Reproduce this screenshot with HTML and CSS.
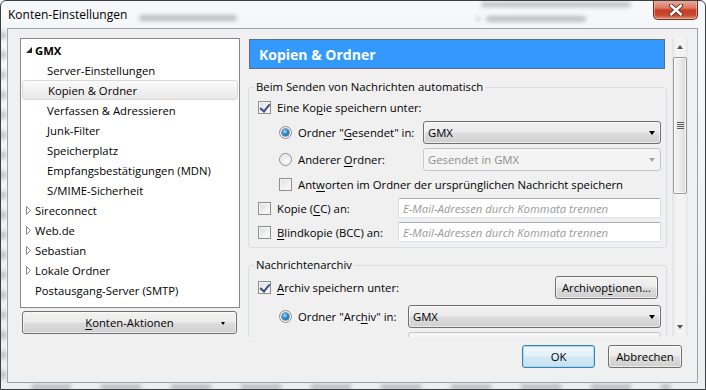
FILE: index.html
```html
<!DOCTYPE html>
<html lang="de">
<head>
    <meta charset="UTF-8">
    <title>Konten-Einstellungen</title>
    <link rel="stylesheet" href="styles.css">
</head>
<body>
    <div class="window">
        <div class="titlebar">
            <span class="title">Konten-Einstellungen</span>
            <span class="glass g1"></span>
            <span class="glass g2"></span>
            <span class="glass g3"></span>
            <span class="glass g4"></span>
            <div class="close-btn">
                <svg width="16" height="12" viewBox="0 0 16 12">
                    <path d="M3 1.5 L13 10.5 M13 1.5 L3 10.5" stroke="#5a2a22" stroke-width="4.2" stroke-linecap="round"/>
                    <path d="M3 1.5 L13 10.5 M13 1.5 L3 10.5" stroke="#ffffff" stroke-width="2.4" stroke-linecap="round"/>
                </svg>
            </div>
        </div>
        <span class="glass side-left"></span>
        <span class="glass side-bottom"></span>
        <div class="client">
            <div class="main">
                <div class="sidebar">
                    <ul class="tree">
                        <li class="tree-item top bold"><span class="twisty"><svg width="6" height="6"><polygon points="6,0 6,6 0,6" fill="#262626"/></svg></span>GMX</li>
                        <li class="tree-item sub">Server-Einstellungen</li>
                        <li class="tree-item sub selected">Kopien &amp; Ordner</li>
                        <li class="tree-item sub">Verfassen &amp; Adressieren</li>
                        <li class="tree-item sub">Junk-Filter</li>
                        <li class="tree-item sub">Speicherplatz</li>
                        <li class="tree-item sub">Empfangsbestätigungen (MDN)</li>
                        <li class="tree-item sub">S/MIME-Sicherheit</li>
                        <li class="tree-item top"><span class="twisty"><svg width="6" height="9"><polygon points="0.5,0.5 4.5,4.5 0.5,8.5" fill="#fff" stroke="#8a8a8a"/></svg></span>Sireconnect</li>
                        <li class="tree-item top"><span class="twisty"><svg width="6" height="9"><polygon points="0.5,0.5 4.5,4.5 0.5,8.5" fill="#fff" stroke="#8a8a8a"/></svg></span>Web.de</li>
                        <li class="tree-item top"><span class="twisty"><svg width="6" height="9"><polygon points="0.5,0.5 4.5,4.5 0.5,8.5" fill="#fff" stroke="#8a8a8a"/></svg></span>Sebastian</li>
                        <li class="tree-item top"><span class="twisty"><svg width="6" height="9"><polygon points="0.5,0.5 4.5,4.5 0.5,8.5" fill="#fff" stroke="#8a8a8a"/></svg></span>Lokale Ordner</li>
                        <li class="tree-item top">Postausgang-Server (SMTP)</li>
                    </ul>
                    <div class="btn btn-menu"><span class="btn-label"><u>K</u>onten-Aktionen</span><span class="menu-arrow"></span></div>
                </div>
                <div class="pane">
                    <div class="pane-content">
                        <div class="pane-header">Kopien &amp; Ordner</div>

                        <fieldset class="group">
                            <legend>Beim Senden von Nachrichten automatisch</legend>
                            <div class="row">
                                <span class="checkbox checked"></span>
                                <span>Eine Ko<u>p</u>ie speichern unter:</span>
                            </div>
                            <div class="row indent tall">
                                <span class="radio checked"></span>
                                <span class="label w-sent">Ordner "<u>G</u>esendet" in:</span>
                                <div class="select"><span>GMX</span><span class="arrow"></span></div>
                            </div>
                            <div class="row indent tall">
                                <span class="radio"></span>
                                <span class="label w-sent">Anderer <u>O</u>rdner:</span>
                                <div class="select disabled"><span>Gesendet in GMX</span><span class="arrow"></span></div>
                            </div>
                            <div class="row indent r4">
                                <span class="checkbox"></span>
                                <span>Ant<u>w</u>orten im Ordner der ursprünglichen Nachricht speichern</span>
                            </div>
                            <div class="row">
                                <span class="checkbox"></span>
                                <span class="label w-cc">Kopie (<u>C</u>C) an:</span>
                                <div class="textbox">E-Mail-Adressen durch Kommata trennen</div>
                            </div>
                            <div class="row">
                                <span class="checkbox"></span>
                                <span class="label w-cc"><u>B</u>lindkopie (BCC) an:</span>
                                <div class="textbox">E-Mail-Adressen durch Kommata trennen</div>
                            </div>
                        </fieldset>

                        <fieldset class="group archive">
                            <legend>Nachrichtenarchiv</legend>
                            <div class="row tall first">
                                <span class="checkbox checked"></span>
                                <span><u>A</u>rchiv speichern unter:</span>
                                <div class="btn btn-options">Archivop<u>t</u>ionen...</div>
                            </div>
                            <div class="row indent tall r-archive">
                                <span class="radio checked"></span>
                                <span class="label w-archive">Ordner "Arc<u>h</u>iv" in:</span>
                                <div class="select"><span>GMX</span><span class="arrow"></span></div>
                            </div>
                            <div class="row indent tall">
                                <span class="radio"></span>
                                <span class="label w-archive"></span>
                                <div class="select disabled"></div>
                            </div>
                        </fieldset>
                    </div>
                    <div class="scrollbar">
                        <div class="sb-arrow up"></div>
                        <div class="sb-thumb"><span class="grip"></span></div>
                        <div class="sb-track"></div>
                        <div class="sb-arrow down"></div>
                    </div>
                </div>
            </div>
            <div class="footer">
                <div class="btn btn-default">OK</div>
                <div class="btn btn-cancel">Abbrechen</div>
            </div>
        </div>
    </div>
</body>
</html>
```

FILE: styles.css
```css
* {
    box-sizing: border-box;
}
body {
    margin: 0;
    font-family: "Open Sans", "Noto Sans", sans-serif;
    font-size: 11.3px;
    color: #000;
    background: #ffffff;
}
u {
    text-decoration-thickness: 1px;
    text-underline-offset: 2px;
}

/* window frame */
.window {
    position: relative;
    width: 706px;
    height: 390px;
    border: 1px solid #3a3e43;
    border-radius: 6px 6px 0 0;
    background: linear-gradient(#f7f8f9, #eceef0);
    overflow: hidden;
}
.titlebar {
    position: relative;
    height: 27px;
    padding-left: 7px;
    display: flex;
    align-items: center;
}
.title {
    position: relative;
    z-index: 1;
    font-size: 12px;
}

/* blurred shapes showing through the glass frame */
.glass {
    position: absolute;
    background: #8a9097;
    filter: blur(2px);
    opacity: 0.55;
    border-radius: 3px;
}
.g1 { left: 138px; top: 14px; width: 98px; height: 6px; }
.g2 { left: 480px; top: 1px; width: 150px; height: 5px; }
.g3 { left: 475px; top: 16px; width: 4px; height: 4px; }
.g4 { left: 485px; top: 15px; width: 100px; height: 6px; }
.side-left {
    left: 0;
    top: 30px;
    width: 4px;
    height: 350px;
    background: repeating-linear-gradient(#6f757c 0px, #6f757c 8px, transparent 8px, transparent 20px);
}
.side-bottom {
    left: 30px;
    bottom: 0;
    width: 640px;
    height: 4px;
    background: repeating-linear-gradient(90deg, #6f757c 0px, #6f757c 40px, transparent 40px, transparent 70px);
}
.close-btn {
    position: absolute;
    top: -1px;
    right: 7px;
    width: 45px;
    height: 20px;
    border: 1px solid #6b2c22;
    border-top: none;
    border-radius: 0 0 5px 5px;
    background: linear-gradient(#ebb0a1 0%, #dc7a63 40%, #c63f27 55%, #c84a30 80%, #e08f79 100%);
    box-shadow: inset 0 0 0 1px rgba(255, 210, 200, 0.5);
    display: flex;
    align-items: center;
    justify-content: center;
}

/* client area */
.client {
    position: relative;
    height: 355px;
    margin: 0 7px 0 6px;
    border: 1px solid #9aa3ad;
    background: #f0f0f0;
    padding: 9px 9px 0 12px;
}
.main {
    display: flex;
    height: 299px;
}
.sidebar {
    width: 220px;
    display: flex;
    flex-direction: column;
}
.tree {
    height: 270px;
    margin: 0;
    padding: 1px 0 0;
    list-style: none;
    border: 1px solid #828790;
    background: #fff;
}
.tree-item {
    height: 20px;
    display: flex;
    align-items: center;
    white-space: nowrap;
}
.tree-item.top {
    padding-left: 14px;
}
.tree-item.top .twisty {
    width: 9px;
    margin-left: -9px;
    display: flex;
    align-items: center;
}
.tree-item.sub {
    padding-left: 26px;
}
.tree-item.bold {
    font-weight: bold;
}
.tree-item.selected {
    margin: 0 1px;
    padding-left: 25px;
    border: 1px solid #d9d9d9;
    border-radius: 3px;
    background: linear-gradient(#fafafa, #e8e8e8);
}

/* buttons */
.btn {
    height: 23px;
    border: 1px solid #707070;
    border-radius: 3px;
    background: linear-gradient(#f2f2f2 0%, #ebebeb 49%, #dddddd 51%, #cfcfcf 100%);
    box-shadow: inset 0 0 0 1px rgba(255, 255, 255, 0.6);
    display: flex;
    align-items: center;
    justify-content: center;
    white-space: nowrap;
}
.btn-menu {
    position: relative;
    width: 215px;
    margin: 3px 0 0 2px;
}
.menu-arrow {
    position: absolute;
    right: 11px;
    top: 10px;
    border-left: 2.5px solid transparent;
    border-right: 2.5px solid transparent;
    border-top: 3px solid #000;
}
.btn-options {
    width: 103px;
    margin: 0 3px 0 auto;
}
.footer {
    display: flex;
    justify-content: flex-end;
    gap: 13px;
    margin-top: 8px;
    padding-right: 6px;
}
.btn-default {
    width: 73px;
    border-color: #3c7fb1;
    box-shadow: inset 0 0 0 1px #a6dcf6;
    background: linear-gradient(#eef7fc 0%, #e4f2fa 49%, #d3e9f5 51%, #c6e1f0 100%);
}
.btn-cancel {
    width: 74px;
}

/* settings pane */
.pane {
    display: flex;
    margin-left: 8px;
}
.pane-content {
    width: 419px;
    height: 299px;
    overflow: hidden;
}
.pane-header {
    height: 30px;
    width: 416px;
    margin: 1px 0 0 1px;
    padding-left: 9px;
    border: 1px solid #5f6d7c;
    background: #3399ff;
    color: #fff;
    font-weight: bold;
    font-size: 14px;
    display: flex;
    align-items: center;
}
.group {
    margin: 10px 0 0;
    padding: 2px 5px 5px 9px;
    min-width: 0;
    border: 1px solid #d5dfe5;
    border-radius: 3px;
}
.group legend {
    margin-left: -4px;
    padding: 0 2px;
    line-height: 16px;
}
.group.archive {
    margin-top: 9px;
    padding-top: 3px;
}
.row {
    height: 20px;
    display: flex;
    align-items: center;
    margin-top: 4px;
    white-space: nowrap;
}
.row:first-of-type {
    margin-top: 0;
}
.row.tall {
    height: 23px;
}
.row.r4 {
    margin-top: 3px;
}
.row.r-archive {
    margin-top: 6px;
}
.row.indent {
    padding-left: 21px;
}
.label {
    flex-shrink: 0;
}
.w-sent { width: 125px; }
.w-cc { width: 121px; }
.w-archive { width: 110px; }

.checkbox, .radio {
    flex-shrink: 0;
    width: 13px;
    height: 13px;
    margin-right: 6px;
    border: 1px solid #8e8f8f;
    background: linear-gradient(135deg, #d9dce1 0%, #f0f1f2 60%, #fbfbfb 100%);
    box-shadow: inset 0 0 0 1px #f4f4f4;
    position: relative;
}
.checkbox.checked::after {
    content: "";
    position: absolute;
    left: 3px;
    top: 0px;
    width: 4px;
    height: 8px;
    border-right: 2px solid #3d4f83;
    border-bottom: 2px solid #3d4f83;
    transform: rotate(40deg);
}
.radio {
    border-radius: 50%;
    background: radial-gradient(circle at 60% 65%, #fdfdfd 0%, #e6e8ea 60%, #d4d7db 100%);
}
.radio.checked::after {
    content: "";
    position: absolute;
    left: 2px;
    top: 2px;
    width: 7px;
    height: 7px;
    border-radius: 50%;
    background: radial-gradient(circle at 40% 35%, #9fe0ff 0%, #2a8fd4 45%, #124f86 100%);
    box-shadow: 0 0 0 0.5px #1c3d63;
}

.select {
    flex: 1;
    height: 23px;
    padding-left: 4px;
    border: 1px solid #707070;
    border-radius: 3px;
    background: linear-gradient(#f2f2f2 0%, #ebebeb 49%, #dddddd 51%, #cfcfcf 100%);
    box-shadow: inset 0 0 0 1px rgba(255, 255, 255, 0.6);
    display: flex;
    align-items: center;
}
.select .arrow {
    margin-left: auto;
    margin-right: 5px;
    border-left: 3.5px solid transparent;
    border-right: 3.5px solid transparent;
    border-top: 4px solid #000;
}
.select.disabled {
    border-color: #c4c8cc;
    background: #f4f4f4;
    box-shadow: none;
    color: #8d8d8d;
}
.select.disabled .arrow {
    border-top-color: #a3a3a3;
}
.textbox {
    flex: 1;
    height: 20px;
    padding-left: 4px;
    border: 1px solid #dbdfe6;
    border-top-color: #abadb3;
    border-radius: 2px;
    background: #fff;
    color: #9a9a9a;
    font-style: italic;
    display: flex;
    align-items: center;
}

/* scrollbar */
.scrollbar {
    width: 16px;
    height: 298px;
    margin-left: 5px;
    display: flex;
    flex-direction: column;
    background: linear-gradient(90deg, #e2e2e2 0%, #f3f3f3 25%, #f3f3f3 75%, #e6e6e6 100%);
}
.sb-arrow {
    height: 18px;
    display: flex;
    align-items: center;
    justify-content: center;
}
.sb-arrow::after {
    content: "";
    border-left: 3.5px solid transparent;
    border-right: 3.5px solid transparent;
}
.sb-arrow.up::after {
    border-bottom: 4px solid #555;
}
.sb-arrow.down::after {
    border-top: 4px solid #555;
}
.sb-thumb {
    height: 137px;
    margin: 1px 1px 0;
    border: 1px solid #9a9a9a;
    border-radius: 2px;
    background: linear-gradient(90deg, #f4f4f4 0%, #ebebeb 50%, #dadada 100%);
    box-shadow: inset 0 0 0 1px rgba(255, 255, 255, 0.7);
    display: flex;
    align-items: center;
    justify-content: center;
}
.grip {
    width: 7px;
    height: 7px;
    background: repeating-linear-gradient(#5a5a5a 0px, #5a5a5a 1px, transparent 1px, transparent 2px);
}
.sb-track {
    flex: 1;
}
```
